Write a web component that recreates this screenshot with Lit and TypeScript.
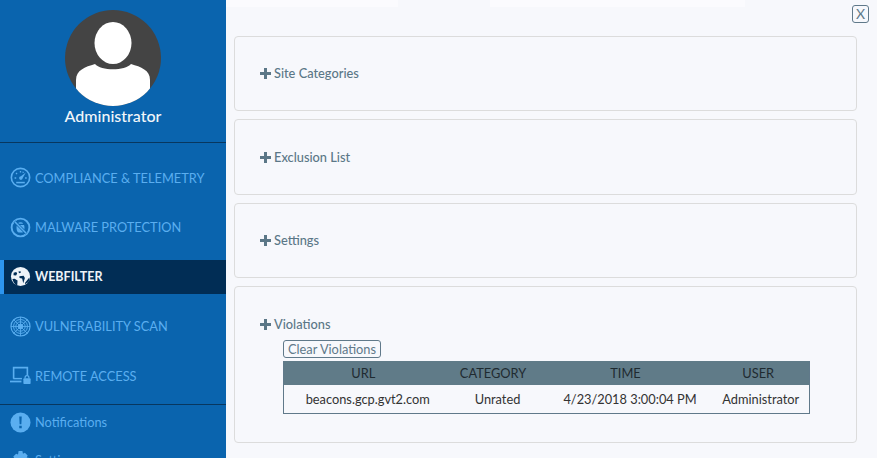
import { LitElement, html, css, svg } from "lit";
import { customElement } from "lit/decorators.js";

const icons = {
  gauge: svg`<circle cx="11" cy="11" r="9.6" fill="none" stroke="currentColor" stroke-width="1.7"/>
    <path d="M4.8 11.500h1.700M15.800 11.500h1.700M6.300 6.400l1.100 1M11 4.300v1.500M14 5l-.5 1.100" fill="none" stroke="currentColor" stroke-width="1.400"/>
    <path d="M16.600 5.800 11.400 9.700a1.900 1.900 0 1 0 1.900 1.900z" fill="currentColor"/>
    <path d="M6.500 16.300h9" stroke="currentColor" stroke-width="1.600"/>`,
  bug: svg`<circle cx="11" cy="11" r="9.300" fill="none" stroke="currentColor" stroke-width="2"/>
    <path d="M8.200 7a3 2.400 0 0 1 5.600 0zM7.300 8.500h7.400c.7 1.500.8 5.500-.7 7.100-.8.900-5.200.9-6 0-1.500-1.600-1.400-5.600-.7-7.100z" fill="currentColor"/>
    <path d="M4.800 4.800l12.400 12.400" stroke="#0a64ae" stroke-width="3"/>
    <path d="M4.800 4.800l12.400 12.400" stroke="currentColor" stroke-width="1.600"/>`,
  globe: svg`<circle cx="11" cy="11" r="10" fill="currentColor"/>
    <path d="M3.800 7.200l2.700-.9 1 1.500-1.100 2.200-2.700-.3zM8.800 5.800l2.200-.4.500 1.500-2 .7zM9.800 10.700l4.500-.4 1.300 2.400-1.700 5.300-1.200-4.900-2.700-.6zM2.500 13.500l2.400-.2 3 2-.3 5.200c-2.400-1-4.200-3.500-5.100-7zM15.800 17.500l4-5 .8 1c-.7 2.700-2.300 4.400-4.800 5.500z" fill="#012d55"/>`,
  radar: svg`<g fill="none" stroke="currentColor"><circle cx="11" cy="11" r="10" stroke-width="1.200"/><circle cx="11" cy="11" r="7.300"/><circle cx="11" cy="11" r="4.900"/>
    <path d="M11 1v20M1 11h20M3.900 3.900l14.200 14.200M18.100 3.900 3.900 18.100" stroke-width=".9"/></g><circle cx="11" cy="11" r="2.800" fill="currentColor"/>`,
  laptop: svg`<path d="M3.800 14.500V2.800h14.400v8.200" fill="none" stroke="currentColor" stroke-width="1.700"/>
    <path d="M0 16.400h12v1.800H0z" fill="currentColor"/><path d="M3.500 13.500h9v1.500h-9z" fill="currentColor"/>
    <rect x="14" y="14" width="7.600" height="6" rx=".8" fill="currentColor"/><path d="M15.800 14.200v-1a2 2 0 0 1 4 0v1" fill="none" stroke="currentColor" stroke-width="1.300"/>`,
  alert: svg`<circle cx="11" cy="11" r="10.500" fill="currentColor"/><path d="M9.700 4.800h2.600l-.4 8h-1.800zM9.700 14.400h2.600v2.600H9.700z" fill="#0a64ae"/>`,
  gear: svg`<path d="M9 1h4l.6 2.800 2-.9 2.900 2.900-1 2 2.900.6v4.200l-2.900.6 1 2-2.900 2.900-2-1L13 21H9l-.6-2.900-2 1-2.900-2.900 1-2L1.600 13.600V9.400l2.900-.6-1-2 2.900-2.900 2 .9z" fill="currentColor"/>`,
};

const nav = [
  ["gauge", "COMPLIANCE & TELEMETRY", false],
  ["bug", "MALWARE PROTECTION", false],
  ["globe", "WEBFILTER", true],
  ["radar", "VULNERABILITY SCAN", false],
  ["laptop", "REMOTE ACCESS", false],
] as const;

@customElement("app-root")
export class AppRoot extends LitElement {
  static styles = css`
    :host { display: block; width: 877px; height: 458px; overflow: hidden; font-family: "Lato", "Liberation Sans", sans-serif; }
    * { box-sizing: border-box; }
    .page { display: flex; height: 458px; background: #f7f8fc; }
    .side { width: 226px; flex: none; background: #0a64ae; display: flex; flex-direction: column; overflow: hidden; }
    .profile { height: 143px; flex: none; display: flex; flex-direction: column; align-items: center; padding-top: 10px; border-bottom: 1px solid #08375f; }
    .avatar { display: block; width: 96px; height: 96px; }
    .name { color: #f2f6fa; font-size: 16px; font-weight: 500; line-height: 20px; }
    .nav { height: 262px; flex: none; border-bottom: 1px solid #08375f; padding-top: 17.800px; display: flex; flex-direction: column; gap: 15.500px; }
    .item { height: 34px; display: flex; align-items: center; gap: 4px; padding-left: 10px; color: #5aaef0; font-size: 12.800px; flex: none; }
    .item svg { width: 21px; height: 21px; flex: none; }
    .item.active { background: #012d55; border-left: 4px solid #2d95ee; padding-left: 6px; color: #eef3f8; font-weight: 700; font-size: 12.500px; }
    .lower { display: flex; flex-direction: column; gap: 4px; }
    .main {
      flex: 1; min-width: 0; padding: 36px 20px 0 8px; position: relative; display: flex; flex-direction: column; gap: 8px;
      background:
        linear-gradient(#fbfbfe, #fbfbfe) 0 0 / 172px 7px no-repeat,
        linear-gradient(#fbfbfe, #fbfbfe) 264px 0 / 255px 7px no-repeat,
        #f7f8fc;
    }
    .close {
      position: absolute; top: 5px; right: 8px; width: 17px; height: 18px; border: 1px solid #60798a; border-radius: 3px;
      background: none; padding: 0; color: #60798a; font: 14px/16px "Lato", sans-serif; text-align: center;
    }
    .panel { border: 1px solid #dcdcdc; border-radius: 4px; padding: 27px 25px 0; background: #f7f8fc; flex: none; }
    .p1 { height: 75px; } .p2 { height: 76px; padding-top: 28px; } .p3 { height: 75px; } .p4 { height: 157px; padding-top: 28px; }
    .title { color: #5b7787; font-size: 12.800px; font-weight: 500; line-height: 18px; display: flex; align-items: center; gap: 3px; }
    .title svg { width: 11px; height: 11px; flex: none; }
    .body { margin: 7px 0 0 23px; }
    .clear {
      display: block; height: 18px; width: 98px; border: 1px solid #60798a; border-radius: 3px; background: none; padding: 0;
      color: #60798a; font: 12.800px/16px "Lato", sans-serif; text-align: center;
    }
    table { width: 527px; margin-top: 3px; border-collapse: collapse; table-layout: fixed; font-size: 12.800px; color: #333; border-bottom: 1px solid #60798a; border-left: 1px solid #60798a; border-right: 1px solid #60798a; }
    th { height: 24px; background: #607b88; color: #1f2a30; font-weight: 400; padding: 0; text-align: center; }
    td { height: 28px; text-align: center; padding: 0 0 0 9px; white-space: nowrap; }
    td:last-child { padding-left: 5px; }
    .c1 { width: 159px; } .c2 { width: 101px; } .c3 { width: 164px; }
    .soft { filter: blur(0.5px); }
  `;

  render() {
    return html`<div class="page">
      <aside class="side">
        <div class="profile">
          <svg class="avatar" viewBox="0 0 96 96">
            <defs><clipPath id="c"><circle cx="48" cy="48" r="48"/></clipPath></defs>
            <circle cx="48" cy="48" r="48" fill="#444"/>
            <g clip-path="url(#c)"><g class="soft" fill="#fff">
              <ellipse cx="48" cy="33" ry="21" rx="18.500"/>
              <path d="M11 100V70C11 60 20 57 30 54 36 61 60 61 66 54 76 57 85 60 85 70V100z"/>
            </g></g>
          </svg>
          <div class="name">Administrator</div>
        </div>
        <nav class="nav">
          ${nav.map(([ic, label, active]) => html`<div class="item ${active ? "active" : ""}"><svg viewBox="0 0 22 22">${icons[ic]}</svg><span>${label}</span></div>`)}
        </nav>
        <div class="lower">
          <div class="item"><svg viewBox="0 0 22 22">${icons.alert}</svg><span>Notifications</span></div>
          <div class="item"><svg viewBox="0 0 22 22">${icons.gear}</svg><span>Settings</span></div>
        </div>
      </aside>
      <main class="main">
        <button class="close">X</button>
        ${[["p1", "Site Categories"], ["p2", "Exclusion List"], ["p3", "Settings"]].map(([c, t]) => html`<section class="panel ${c}">${this.title_(t)}</section>`)}
        <section class="panel p4">
          ${this.title_("Violations")}
          <div class="body">
            <button class="clear">Clear Violations</button>
            <table>
              <thead><tr><th class="c1">URL</th><th class="c2">CATEGORY</th><th class="c3">TIME</th><th>USER</th></tr></thead>
              <tbody><tr><td>beacons.gcp.gvt2.com</td><td>Unrated</td><td>4/23/2018 3:00:04 PM</td><td>Administrator</td></tr></tbody>
            </table>
          </div>
        </section>
      </main>
    </div>`;
  }

  title_(t: string) {
    return html`<div class="title"><svg viewBox="0 0 11 11"><path d="M4 0h3v4h4v3H7v4H4V7H0V4h4z" fill="#5b7787"/></svg><span>${t}</span></div>`;
  }
}
